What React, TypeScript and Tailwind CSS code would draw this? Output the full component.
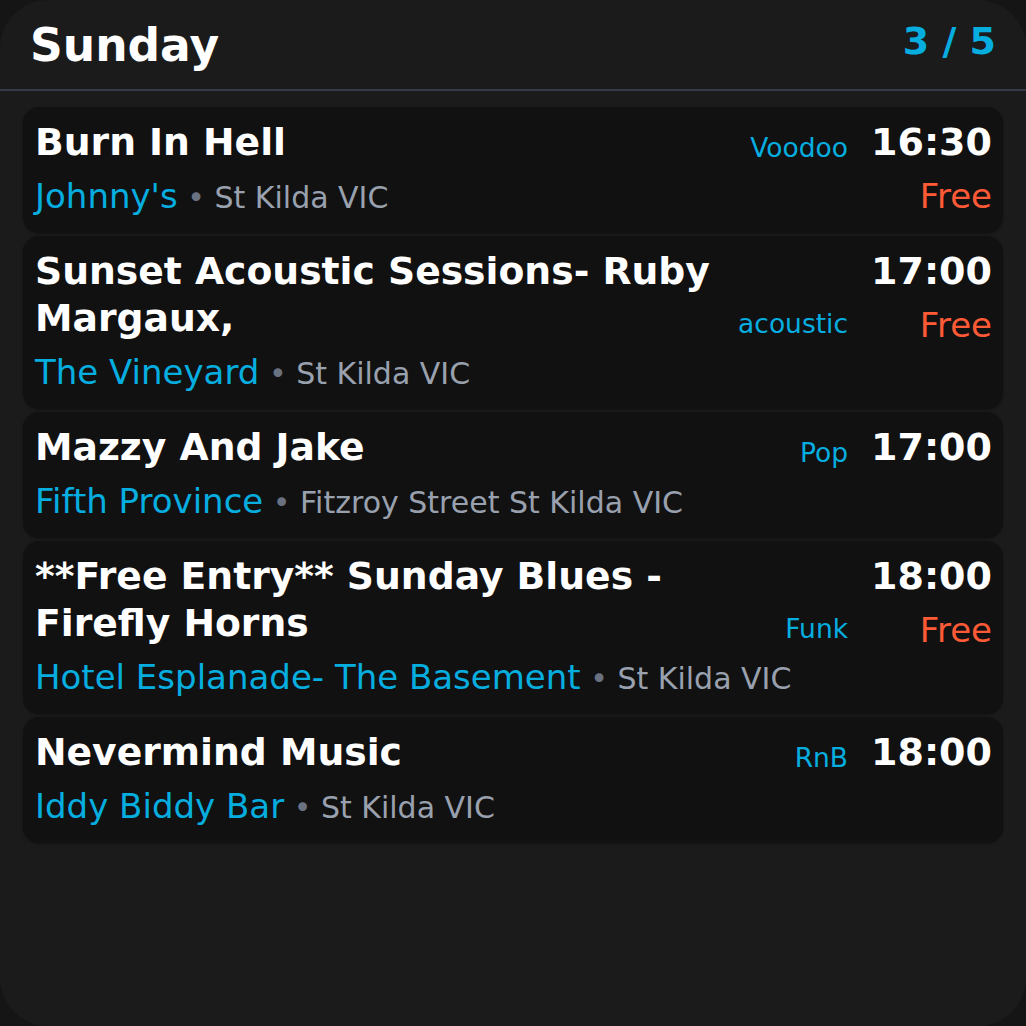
import React from 'react';

type Gig = {
  title: string;
  venue: string;
  location: string;
  genre: string;
  time: string;
  free?: boolean;
};

const gigs: Gig[] = [
  { title: 'Burn In Hell', venue: "Johnny's", location: 'St Kilda VIC', genre: 'Voodoo', time: '16:30', free: true },
  { title: 'Sunset Acoustic Sessions- Ruby Margaux,', venue: 'The Vineyard', location: 'St Kilda VIC', genre: 'acoustic', time: '17:00', free: true },
  { title: 'Mazzy And Jake', venue: 'Fifth Province', location: 'Fitzroy Street St Kilda VIC', genre: 'Pop', time: '17:00' },
  { title: '**Free Entry** Sunday Blues - Firefly Horns', venue: 'Hotel Esplanade- The Basement', location: 'St Kilda VIC', genre: 'Funk', time: '18:00', free: true },
  { title: 'Nevermind Music', venue: 'Iddy Biddy Bar', location: 'St Kilda VIC', genre: 'RnB', time: '18:00' },
];

const GigCard: React.FC<{ gig: Gig }> = ({ gig }) => {
  return (
    <div className="flex gap-[23px] rounded-2xl bg-[#111111] pl-3 pr-[11px] pt-3 pb-[15px] shadow-sm shadow-black/20">
      <div className="flex-1 min-w-0">
        <div className="flex items-end gap-4">
          <div className="flex-1 min-w-0 text-[37.7px] leading-[47px] font-bold text-white">{gig.title}</div>
          <div className="shrink-0 text-[26.5px] leading-[36px] text-[#06aee0]">{gig.genre}</div>
        </div>
        <div className="mt-2 text-[34px] leading-[44px] whitespace-nowrap">
          <span className="text-[#06aee0]">{gig.venue}</span>
          <span className="text-[30px] leading-[30px] text-gray-500"> • </span>
          <span className="text-[30px] leading-[30px] text-gray-400">{gig.location}</span>
        </div>
      </div>
      <div className="shrink-0 text-right">
        <div className="text-[38px] leading-[47px] font-bold text-white">{gig.time}</div>
        {gig.free && <div className="mt-[10px] text-[34px] leading-[40px] text-[#ff5a36]">Free</div>}
      </div>
    </div>
  );
};

const App: React.FC = () => {
  return (
    <div className="w-[1026px] h-[1026px] bg-[#151515]" style={{ fontFamily: '"DejaVu Sans", sans-serif' }}>
      <div className="h-full rounded-[48px] bg-[#1b1b1b] overflow-hidden">
        <header className="flex h-[89px] items-center justify-between px-[30px] pt-1">
          <h1 className="text-[45.5px] font-bold text-white">Sunday</h1>
          <span className="mb-[10px] text-[38px] font-bold text-[#06aee0]">3 / 5</span>
        </header>
        <div className="h-[2px] bg-[#363c47]"></div>
        <div className="mx-[23px] mt-4 flex flex-col gap-[3px]">
          {gigs.map((g, i) => (
            <GigCard key={i} gig={g} />
          ))}
        </div>
      </div>
    </div>
  );
};

export default App;
